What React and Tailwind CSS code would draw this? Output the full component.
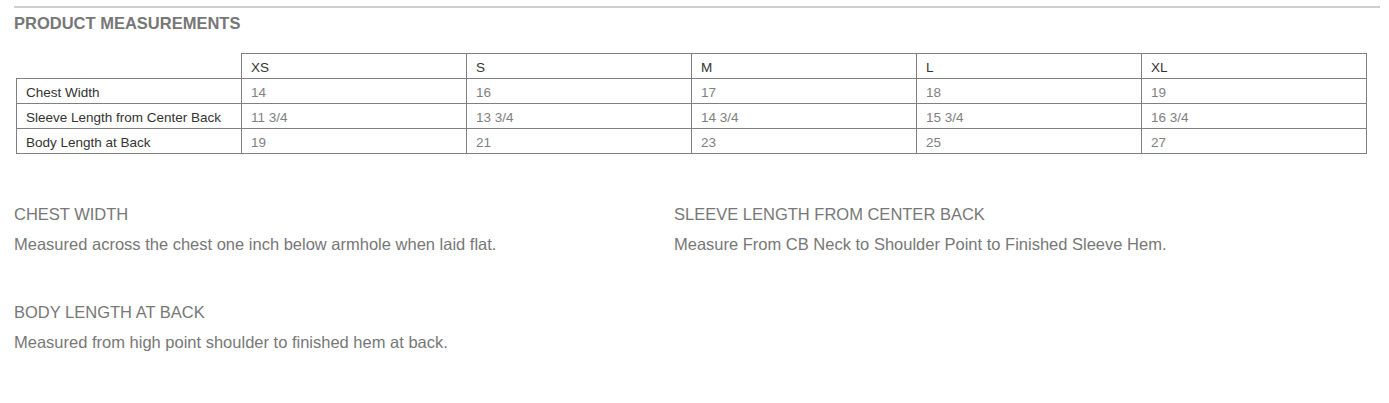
const sizes = ["XS", "S", "M", "L", "XL"];
const rows = [
  { label: "Chest Width", values: ["14", "16", "17", "18", "19"] },
  { label: "Sleeve Length from Center Back", values: ["11 3/4", "13 3/4", "14 3/4", "15 3/4", "16 3/4"] },
  { label: "Body Length at Back", values: ["19", "21", "23", "25", "27"] },
];
const notes = [
  { title: "CHEST WIDTH", text: "Measured across the chest one inch below armhole when laid flat." },
  { title: "SLEEVE LENGTH FROM CENTER BACK", text: "Measure From CB Neck to Shoulder Point to Finished Sleeve Hem." },
  { title: "BODY LENGTH AT BACK", text: "Measured from high point shoulder to finished hem at back." },
];

export default function App() {
  return (
    <div className="min-h-[403px] bg-white pt-[6px] pl-[14px] pr-[9px] font-['Liberation_Sans',Arial,sans-serif]">
      <div className="h-[2px] bg-[#cfcfcf]" />
      <h2 className="mt-[6px] text-[16.5px] leading-[18px] font-bold text-[#777]">
        PRODUCT MEASUREMENTS
      </h2>
      <table className="mt-[21px] ml-[2px] w-[1351px] table-fixed border-collapse text-[13.5px] leading-[15px]">
        <thead>
          <tr className="h-[25px]">
            <th className="border-b border-[#808080]" />
            {sizes.map((s) => (
              <th key={s} className="border border-[#808080] pt-[2px] pl-[9px] text-left font-normal text-[#333]">
                {s}
              </th>
            ))}
          </tr>
        </thead>
        <tbody>
          {rows.map((r) => (
            <tr key={r.label} className="h-[25px]">
              <td className="border border-[#808080] pt-[2px] pl-[9px] text-[#333]">{r.label}</td>
              {r.values.map((v, i) => (
                <td key={i} className="border border-[#808080] pt-[2px] pl-[9px] text-[#808080]">
                  {v}
                </td>
              ))}
            </tr>
          ))}
        </tbody>
      </table>
      <div className="mt-[50px] grid grid-cols-[660px_660px] gap-y-[48px] text-[#777]">
        {notes.map((n) => (
          <div key={n.title}>
            <h3 className="text-[16.5px] leading-[20px]">{n.title}</h3>
            <p className="mt-[10px] text-[16.5px] leading-[20px]">{n.text}</p>
          </div>
        ))}
      </div>
    </div>
  );
}
